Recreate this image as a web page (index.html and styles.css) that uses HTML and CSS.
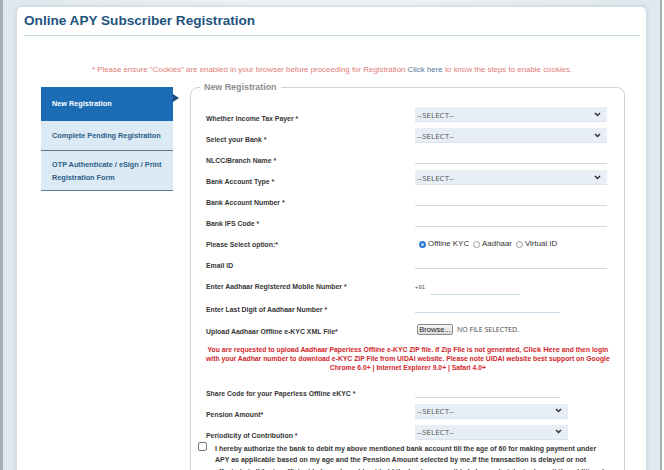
FILE: index.html
```html
<!DOCTYPE html>
<html lang="en">
<head>
<meta charset="utf-8">
<title>Online APY Subscriber Registration</title>
<link rel="stylesheet" href="styles.css">
</head>
<body>
<div class="frame">
  <div class="card">
    <h1 class="title">Online APY Subscriber Registration</h1>
    <p class="notice">* Please ensure "Cookies" are enabled in your browser before proceeding for Registration <a class="notice-link">Click here</a> to know the steps to enable cookies.</p>
    <div class="main">
      <ul class="side">
        <li class="side-item active">New Registration<span class="arrow"></span></li>
        <li class="side-item">Complete Pending Registration</li>
        <li class="side-item tall">OTP Authenticate / eSign / Print Registration Form</li>
      </ul>
      <fieldset class="form">
        <legend class="legend">New Registration</legend>

        <div class="row"><span class="label">Whether Income Tax Payer *</span>
          <div class="select">--SELECT--<svg class="chev" width="7" height="5" viewBox="0 0 7 5"><path d="M1 1l2.5 2.5L6 1" fill="none" stroke="#333" stroke-width="1.5"/></svg></div></div>
        <div class="row"><span class="label">Select your Bank *</span>
          <div class="select">--SELECT--<svg class="chev" width="7" height="5" viewBox="0 0 7 5"><path d="M1 1l2.5 2.5L6 1" fill="none" stroke="#333" stroke-width="1.5"/></svg></div></div>
        <div class="row"><span class="label">NLCC/Branch Name *</span>
          <div class="line"></div></div>
        <div class="row"><span class="label">Bank Account Type *</span>
          <div class="select">--SELECT--<svg class="chev" width="7" height="5" viewBox="0 0 7 5"><path d="M1 1l2.5 2.5L6 1" fill="none" stroke="#333" stroke-width="1.5"/></svg></div></div>
        <div class="row"><span class="label">Bank Account Number *</span>
          <div class="line"></div></div>
        <div class="row"><span class="label">Bank IFS Code *</span>
          <div class="line"></div></div>
        <div class="row"><span class="label">Please Select option:*</span>
          <div class="radios">
            <span class="radio checked"></span><span class="rtext">Offline KYC</span>
            <span class="radio"></span><span class="rtext">Aadhaar</span>
            <span class="radio"></span><span class="rtext">Virtual ID</span>
          </div></div>
        <div class="row"><span class="label">Email ID</span>
          <div class="line"></div></div>
        <div class="row r23"><span class="label">Enter Aadhaar Registered Mobile Number *</span>
          <div class="mobile"><span class="code">+91</span><div class="line short"></div></div></div>
        <div class="row r22"><span class="label">Enter Last Digit of Aadhaar Number *</span>
          <div class="line mid"></div></div>
        <div class="row r24"><span class="label">Upload Aadhaar Offline e-KYC XML File*</span>
          <div class="file"><span class="browse">Browse...</span><span class="nofile">NO FILE SELECTED.</span></div></div>

        <p class="warn">You are requested to upload Aadhaar Paperless Offline e-KYC ZIP file. If Zip File is not generated, <span class="warn-link">Click Here</span> and then login<br>with your Aadhar number to download e-KYC ZIP File from UIDAI website. Please note UIDAI website best support on Google<br>Chrome 6.0+ | Internet Explorer 9.0+ | Safari 4.0+</p>

        <div class="row"><span class="label">Share Code for your Paperless Offline eKYC *</span>
          <div class="line mid"></div></div>
        <div class="row"><span class="label">Pension Amount*</span>
          <div class="select narrow">--SELECT--<svg class="chev" width="7" height="5" viewBox="0 0 7 5"><path d="M1 1l2.5 2.5L6 1" fill="none" stroke="#333" stroke-width="1.5"/></svg></div></div>
        <div class="row"><span class="label">Periodicity of Contribution *</span>
          <div class="select narrow">--SELECT--<svg class="chev" width="7" height="5" viewBox="0 0 7 5"><path d="M1 1l2.5 2.5L6 1" fill="none" stroke="#333" stroke-width="1.5"/></svg></div></div>

        <div class="agree">
          <span class="check"></span>
          <p class="agree-text">I hereby authorize the bank to debit my above mentioned bank account till the age of 60 for making payment under<br>APY as applicable based on my age and the Pension Amount selected by me.If the transaction is delayed or not<br>effected at all for insufficient balance.I would not hold the bank responsible.I also undertake to deposit the additional</p>
        </div>
      </fieldset>
    </div>
  </div>
</div>
</body>
</html>
```
FILE: styles.css
```css
html, body {
  margin: 0;
  padding: 0;
  height: 470px;
  overflow: hidden;
  background: #ffffff;
}
.frame {
  margin-right: 2px;
  height: 470px;
  box-sizing: border-box;
  border-left: 3px solid #a3b0b4;
  border-right: 2px solid #a3b0b4;
  background: linear-gradient(90deg, #dfe8ee, #edf2f5 40%, #edf2f5 60%, #dfe8ee);
  padding: 6px 13px 0 13px;
}
.card {
  background: #ffffff;
  border: 1px solid #d2dce1;
  border-radius: 6px 6px 0 0;
  box-shadow: 0 0 4px rgba(90, 120, 140, 0.18);
  height: 520px;
  padding: 0 6px 0 7px;
}
.title {
  margin: 0;
  padding: 6px 0 6px;
  font: bold 13.6px/16px "Liberation Sans", Arial, sans-serif;
  color: #22537e;
  border-bottom: 1px solid #c5d9e2;
}
.notice {
  margin: 29px 0 0;
  text-align: center;
  white-space: nowrap;
  font: 7.9px/10px "Liberation Sans", Arial, sans-serif;
  color: #e27c76;
}
.notice-link {
  color: #4f7696;
}
.main {
  display: flex;
  align-items: flex-start;
  margin-top: 7px;
  padding-left: 17px;
}
.side {
  list-style: none;
  margin: 5px 0 0;
  padding: 0;
  width: 132px;
  flex: none;
}
.side-item {
  position: relative;
  background: #dceaf5;
  color: #2c5d86;
  font: bold 7.3px/10px "Liberation Sans", Arial, sans-serif;
  padding: 10px 6px 9px 11px;
  border-bottom: 1px solid #5d7b93;
}
.side-item.active {
  background: #1b6cb5;
  color: #ffffff;
  padding: 12px 6px 12px 11px;
  border-bottom: none;
}
.side-item.tall {
  line-height: 13px;
  padding: 6.5px 6px 6.5px 11px;
}
.arrow {
  position: absolute;
  right: -6px;
  top: 7px;
  width: 0;
  height: 0;
  border-left: 6px solid #1f4f7a;
  border-top: 4px solid transparent;
  border-bottom: 4px solid transparent;
}
.form {
  flex: none;
  width: 432px;
  box-sizing: border-box;
  margin: 0 0 0 17px;
  padding: 11px 14px 0 15px;
  border: 1px solid #cfd3d5;
  border-radius: 8px 8px 0 0;
  min-height: 420px;
}
.legend {
  padding: 0 4px;
  margin-left: -6px;
  font: bold 8.9px/11px "Liberation Sans", Arial, sans-serif;
  color: #8e8e8e;
}
.row {
  display: grid;
  grid-template-columns: 209px 192px;
  height: 21px;
}
.row.r22 { height: 22px; }
.row.r23 { height: 23px; }
.row.r24 { height: 24px; }
.label {
  padding-top: 9.5px;
  font: bold 6.9px/9px "Liberation Sans", Arial, sans-serif;
  color: #363636;
  white-space: nowrap;
}
.select {
  margin-top: 3px;
  height: 15px;
  box-sizing: border-box;
  background: #e7eef5;
  border-bottom: 1px solid #dbe4ec;
  display: flex;
  align-items: center;
  justify-content: space-between;
  padding: 0 6px 0 2px;
  font: 8px/15px "Open Sans", sans-serif;
  color: #565656;
}
.select.narrow {
  width: 153px;
}
.chev {
  display: block;
}
.line {
  height: 18px;
  box-sizing: border-box;
  border-bottom: 1px solid #cbdde6;
}
.line.mid {
  width: 145px;
}
.radios {
  display: flex;
  align-items: center;
  padding-top: 10px;
  height: 8px;
  font: 7.9px/8px "Liberation Sans", Arial, sans-serif;
  color: #333;
}
.radio {
  width: 7px;
  height: 7px;
  box-sizing: border-box;
  border: 1px solid #9a9a9a;
  border-radius: 50%;
  margin: 0 2px 0 3px;
  background: #fff;
}
.radio.checked {
  border: 2px solid #2f7bd4;
  background: #2f7bd4;
  box-shadow: inset 0 0 0 1px #ffffff;
  margin-left: 4px;
}
.rtext {
  margin-right: 1px;
}
.mobile {
  display: flex;
  align-items: flex-end;
}
.code {
  font: 6px/9px "Liberation Sans", Arial, sans-serif;
  color: #555;
  padding-bottom: 3px;
  width: 15px;
}
.line.short {
  width: 90px;
}
.file {
  display: flex;
  align-items: center;
  margin-top: 7px;
  height: 11px;
}
.browse {
  margin-left: 2px;
  width: 36px;
  height: 11px;
  box-sizing: border-box;
  border: 1px solid #8c8c8c;
  border-radius: 2px;
  background: linear-gradient(#f6f6f6, #dcdcdc);
  font: 7.6px/9px "Liberation Sans", Arial, sans-serif;
  color: #222;
  text-align: center;
}
.nofile {
  margin-left: 4px;
  font: 7px/11px "Open Sans", sans-serif;
  color: #444;
}
.warn {
  margin: 3.5px 0 7.6px;
  text-align: center;
  white-space: nowrap;
  font: bold 6.8px/9.3px "Liberation Sans", Arial, sans-serif;
  color: #d3252b;
}
.warn-link {
  font-size: 7.5px;
}
.agree {
  display: flex;
  align-items: flex-start;
  margin-left: -8px;
}
.check {
  flex: none;
  width: 9px;
  height: 9px;
  box-sizing: border-box;
  border: 1px solid #7a7a7a;
  border-radius: 2px;
  margin-top: -1px;
  background: #fff;
}
.agree-text {
  margin: 0 0 0 8px;
  white-space: nowrap;
  font: bold 7px/11.4px "Liberation Sans", Arial, sans-serif;
  color: #363636;
}
```
